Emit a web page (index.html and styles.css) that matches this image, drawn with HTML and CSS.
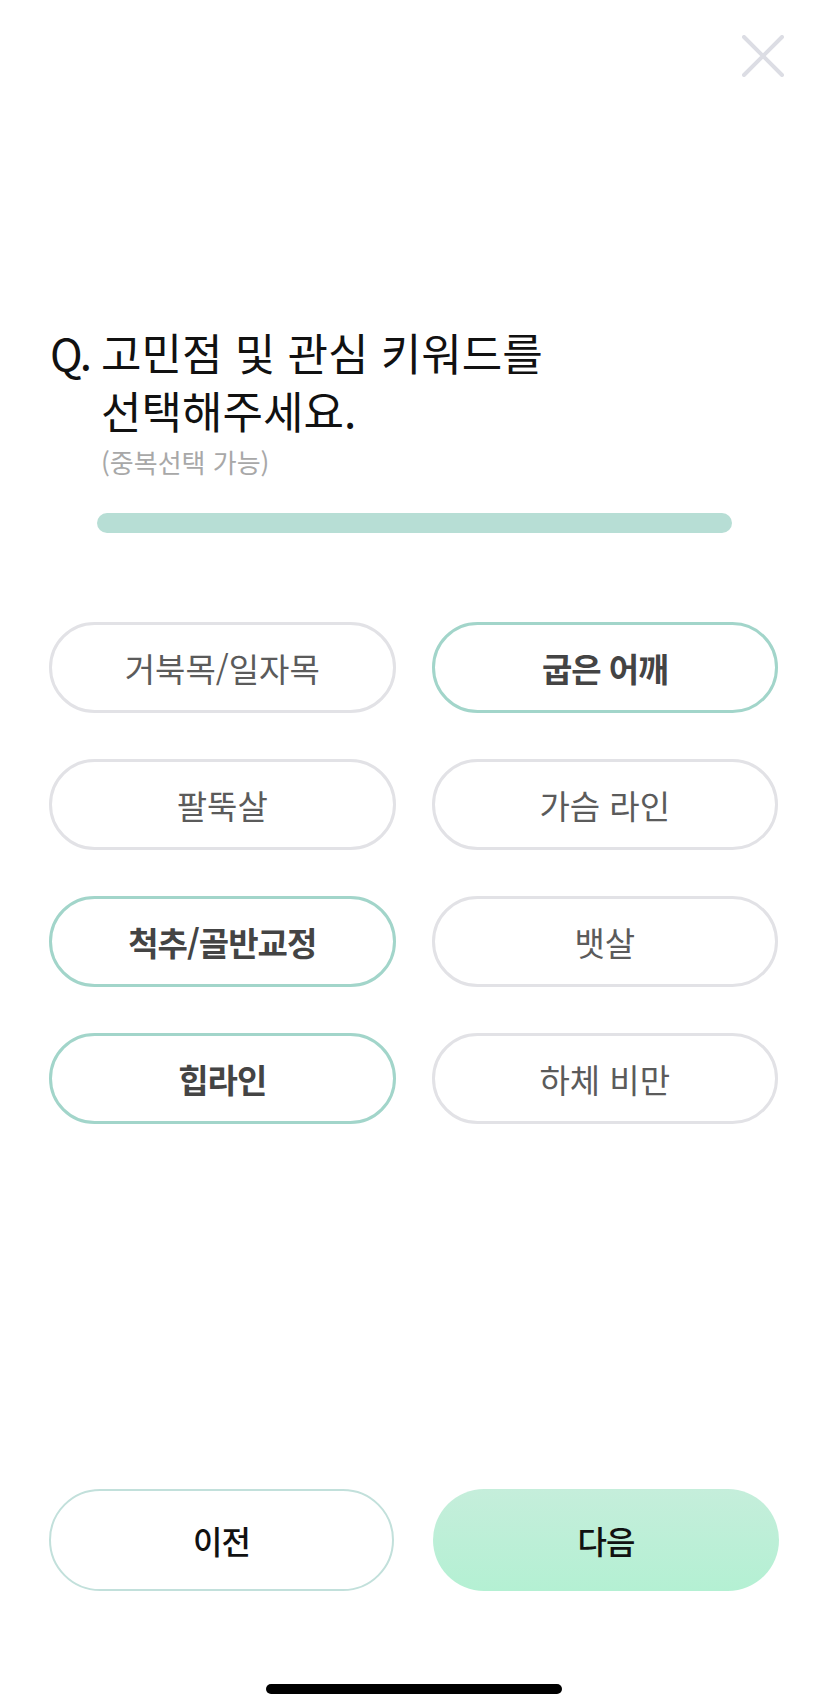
FILE: index.html
```html
<!DOCTYPE html>
<html lang="ko">
<head>
<meta charset="utf-8">
<title>고민점 선택</title>
<link rel="stylesheet" href="styles.css">
</head>
<body>
<div class="page">
  <div class="topbar">
    <button class="close" aria-label="닫기">
      <svg width="42" height="42" viewBox="0 0 42 42"><path d="M2 2 L40 40 M40 2 L2 40" stroke="#dcdde4" stroke-width="4" stroke-linecap="round" fill="none"/></svg>
    </button>
  </div>

  <div class="question">
    <span class="q-mark">Q.</span>
    <div class="q-body">
      <h1 class="q-text">고민점 및 관심 키워드를<br>선택해주세요.</h1>
      <p class="q-sub">(중복선택 가능)</p>
    </div>
  </div>

  <div class="progress"></div>

  <div class="chips">
    <button class="chip">거북목/일자목</button>
    <button class="chip chip-on">굽은 어깨</button>
    <button class="chip">팔뚝살</button>
    <button class="chip">가슴 라인</button>
    <button class="chip chip-on">척추/골반교정</button>
    <button class="chip">뱃살</button>
    <button class="chip chip-on">힙라인</button>
    <button class="chip">하체 비만</button>
  </div>

  <div class="spacer"></div>

  <div class="actions">
    <button class="btn btn-prev">이전</button>
    <button class="btn btn-next">다음</button>
  </div>

  <div class="home-indicator"></div>
</div>
</body>
</html>
```

FILE: styles.css
```css
* { box-sizing: border-box; }
html, body {
  margin: 0;
  padding: 0;
  background: #ffffff;
}
body {
  font-family: "Noto Sans CJK KR", "Noto Sans", sans-serif;
  color: #111;
}
.page {
  width: 828px;
  height: 1708px;
  display: flex;
  flex-direction: column;
  padding: 0 50px 14px 49px;
}
.topbar {
  display: flex;
  justify-content: flex-end;
  padding-top: 35px;
  margin-right: -6px;
}
.close {
  width: 42px;
  height: 42px;
  padding: 0;
  border: 0;
  background: none;
  display: block;
}
.close svg { display: block; }

.question {
  margin-top: 246px;
  display: flex;
  align-items: flex-start;
}
.q-mark {
  width: 52px;
  flex: none;
  font-size: 44px;
  line-height: 58px;
  letter-spacing: -3px;
  padding-left: 1px;
}
.q-text {
  margin: 0;
  font-size: 44px;
  line-height: 58px;
  font-weight: 400;
  letter-spacing: 0;
  color: #111;
}
.q-sub {
  margin: 4px 0 0;
  font-size: 26px;
  line-height: 38px;
  color: #a8a8a8;
  letter-spacing: 0;
}

.progress {
  margin: 32px 46px 0 48px;
  height: 20px;
  border-radius: 10px;
  background: #b7ded5;
}

.chips {
  margin-top: 89px;
  display: grid;
  grid-template-columns: 1fr 1fr;
  column-gap: 36px;
  row-gap: 46px;
}
.chip {
  height: 91px;
  border-radius: 46px;
  border: 3px solid #e2e2e6;
  background: #fff;
  font-family: inherit;
  font-size: 33px;
  font-weight: 400;
  letter-spacing: 0;
  color: #5b5b5b;
  padding: 0;
}
.chip-on {
  border-color: #a2d5ca;
  color: #444;
  font-weight: 700;
  letter-spacing: -1px;
}

.spacer { flex: 1; }

.actions {
  display: grid;
  grid-template-columns: 345px 346px;
  column-gap: 39px;
}
.btn {
  height: 102px;
  border-radius: 51px;
  font-family: inherit;
  font-size: 32px;
  font-weight: 500;
  letter-spacing: -1px;
  color: #111;
  padding: 0;
}
.btn-prev {
  background: #fff;
  border: 2px solid #c2e0db;
}
.btn-next {
  border: 0;
  background: linear-gradient(180deg, #c5eedb 0%, #b4f0d3 100%);
}

.home-indicator {
  margin: 93px auto 0;
  width: 296px;
  height: 10px;
  border-radius: 5px;
  background: #000;
}
```
